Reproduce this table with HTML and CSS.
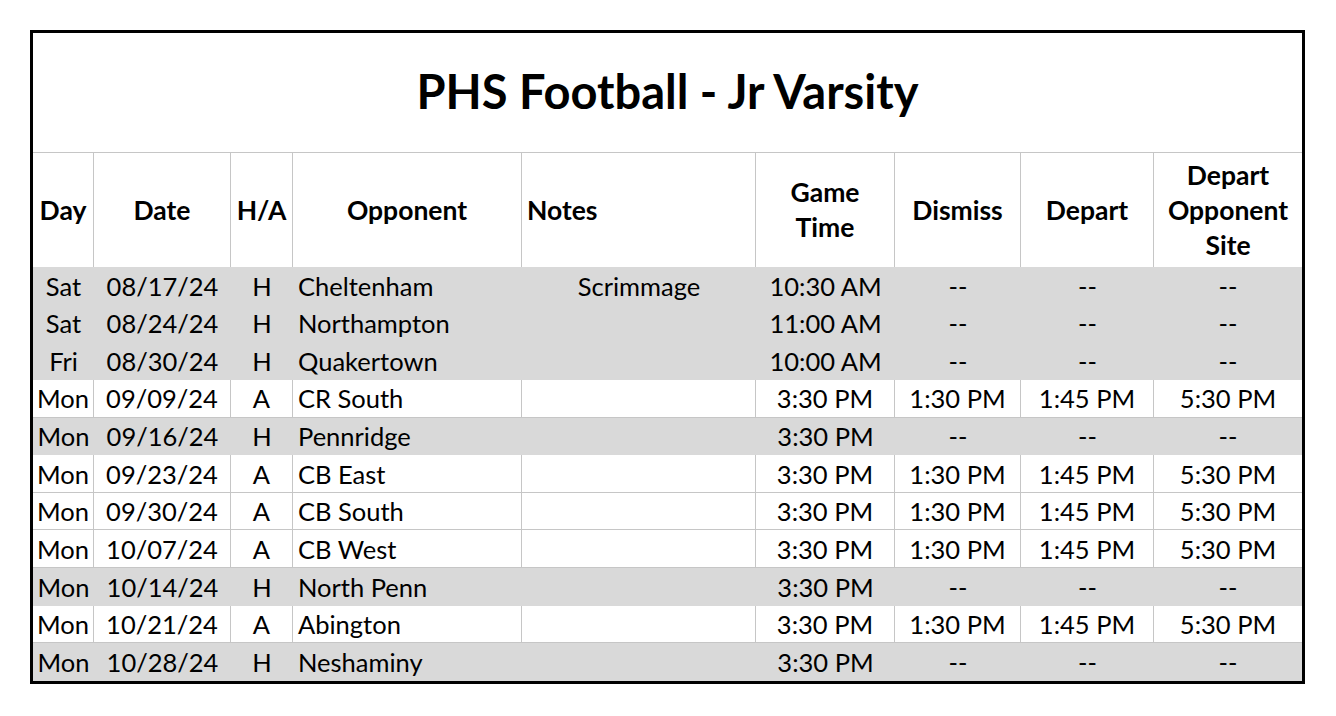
FILE: index.html
```html
<!DOCTYPE html>
<html>
<head>
<meta charset="utf-8">
<link rel="stylesheet" href="styles.css">
</head>
<body>
<div class="sheet">
  <div class="title">PHS Football - Jr Varsity</div>
  <div class="row head">
    <div class="c">Day</div>
    <div class="c">Date</div>
    <div class="c">H/A</div>
    <div class="c">Opponent</div>
    <div class="l">Notes</div>
    <div class="c">Game<br>Time</div>
    <div class="c">Dismiss</div>
    <div class="c">Depart</div>
    <div class="c">Depart<br>Opponent<br>Site</div>
  </div>
  <div class="row gray">
    <div class="c">Sat</div><div class="c">08/17/24</div><div class="c">H</div><div class="l">Cheltenham</div><div class="c">Scrimmage</div><div class="c">10:30 AM</div><div class="c">--</div><div class="c">--</div><div class="c">--</div>
  </div>
  <div class="row gray">
    <div class="c">Sat</div><div class="c">08/24/24</div><div class="c">H</div><div class="l">Northampton</div><div class="c"></div><div class="c">11:00 AM</div><div class="c">--</div><div class="c">--</div><div class="c">--</div>
  </div>
  <div class="row gray">
    <div class="c">Fri</div><div class="c">08/30/24</div><div class="c">H</div><div class="l">Quakertown</div><div class="c"></div><div class="c">10:00 AM</div><div class="c">--</div><div class="c">--</div><div class="c">--</div>
  </div>
  <div class="row white">
    <div class="c">Mon</div><div class="c">09/09/24</div><div class="c">A</div><div class="l">CR South</div><div class="c"></div><div class="c">3:30 PM</div><div class="c">1:30 PM</div><div class="c">1:45 PM</div><div class="c">5:30 PM</div>
  </div>
  <div class="row gray">
    <div class="c">Mon</div><div class="c">09/16/24</div><div class="c">H</div><div class="l">Pennridge</div><div class="c"></div><div class="c">3:30 PM</div><div class="c">--</div><div class="c">--</div><div class="c">--</div>
  </div>
  <div class="row white">
    <div class="c">Mon</div><div class="c">09/23/24</div><div class="c">A</div><div class="l">CB East</div><div class="c"></div><div class="c">3:30 PM</div><div class="c">1:30 PM</div><div class="c">1:45 PM</div><div class="c">5:30 PM</div>
  </div>
  <div class="row white">
    <div class="c">Mon</div><div class="c">09/30/24</div><div class="c">A</div><div class="l">CB South</div><div class="c"></div><div class="c">3:30 PM</div><div class="c">1:30 PM</div><div class="c">1:45 PM</div><div class="c">5:30 PM</div>
  </div>
  <div class="row white">
    <div class="c">Mon</div><div class="c">10/07/24</div><div class="c">A</div><div class="l">CB West</div><div class="c"></div><div class="c">3:30 PM</div><div class="c">1:30 PM</div><div class="c">1:45 PM</div><div class="c">5:30 PM</div>
  </div>
  <div class="row gray">
    <div class="c">Mon</div><div class="c">10/14/24</div><div class="c">H</div><div class="l">North Penn</div><div class="c"></div><div class="c">3:30 PM</div><div class="c">--</div><div class="c">--</div><div class="c">--</div>
  </div>
  <div class="row white">
    <div class="c">Mon</div><div class="c">10/21/24</div><div class="c">A</div><div class="l">Abington</div><div class="c"></div><div class="c">3:30 PM</div><div class="c">1:30 PM</div><div class="c">1:45 PM</div><div class="c">5:30 PM</div>
  </div>
  <div class="row gray">
    <div class="c">Mon</div><div class="c">10/28/24</div><div class="c">H</div><div class="l">Neshaminy</div><div class="c"></div><div class="c">3:30 PM</div><div class="c">--</div><div class="c">--</div><div class="c">--</div>
  </div>
</div>
</body>
</html>
```

FILE: styles.css
```css
* { box-sizing: border-box; }
html, body { margin: 0; padding: 0; background: #fff; }
body {
  font-family: Lato, "Open Sans", sans-serif;
  color: #000;
  padding: 30px 0 0 30px;
}
.sheet {
  width: 1275px;
  height: 654px;
  border: 3px solid #000;
  display: flex;
  flex-direction: column;
}
.title {
  height: 120px;
  border-bottom: 1px solid #c6c6c6;
  display: flex;
  align-items: center;
  justify-content: center;
  font-weight: 700;
  font-size: 47px;
  padding-bottom: 4px;
}
.row {
  display: grid;
  grid-template-columns: 61px 137px 62px 229px 234px 139px 126px 133px 148px;
  font-size: 25.5px;
}
.row > div {
  display: flex;
  align-items: center;
  white-space: nowrap;
}
.row > .c { justify-content: center; text-align: center; }
.row > .l { justify-content: flex-start; padding-left: 5px; }
.head {
  height: 114px;
  font-weight: 700;
  font-size: 26.5px;
  line-height: 35px;
}
.head > div, .white > div { border-right: 1px solid #c6c6c6; }
.head > div:last-child, .white > div:last-child { border-right: none; }
.gray, .white { flex: 1 1 0; }
.gray { background: #d9d9d9; }
.white > div { border-bottom: 1px solid #c6c6c6; }
```
